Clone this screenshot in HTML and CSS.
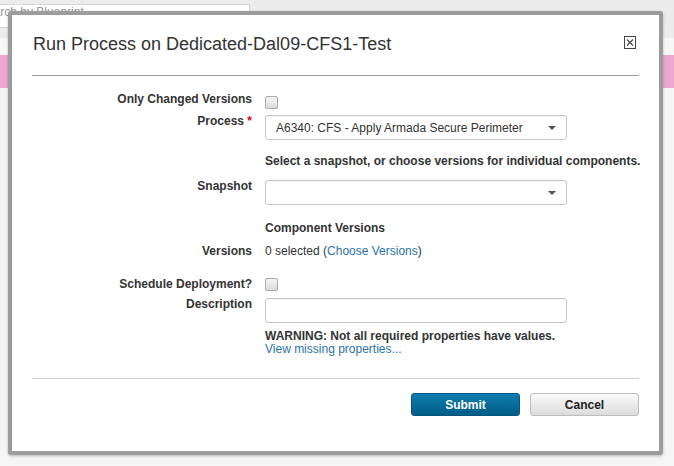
FILE: index.html
```html
<!DOCTYPE html>
<html>
<head>
<meta charset="utf-8">
<link rel="stylesheet" href="styles.css">
</head>
<body>
<div class="page">
  <div class="topbar"><div class="search">Search by Blueprint</div></div>
  <div class="subbar"></div>
  <div class="pinkbar"></div>
</div>
<div class="dialog">
  <div class="dlg-head">
    <h1 class="title">Run Process on Dedicated-Dal09-CFS1-Test</h1>
    <span class="close" title="Close">
      <svg width="12" height="13" viewBox="0 0 12 13"><rect x="0.5" y="0.5" width="11" height="12" fill="none" stroke="#444" stroke-width="1"/><path d="M3 3.5 L9 9.5 M9 3.5 L3 9.5" stroke="#444" stroke-width="1.1" fill="none"/></svg>
    </span>
  </div>
  <div class="form">
    <div class="row r1">
      <div class="label">Only Changed Versions</div>
      <div class="field"><span class="check c1"></span></div>
    </div>
    <div class="row r2">
      <div class="label">Process <span class="req">*</span></div>
      <div class="field"><div class="select"><span>A6340: CFS - Apply Armada Secure Perimeter</span><span class="caret"></span></div></div>
    </div>
    <div class="row r3">
      <div class="label"></div>
      <div class="field bold">Select a snapshot, or choose versions for individual components.</div>
    </div>
    <div class="row r4">
      <div class="label">Snapshot</div>
      <div class="field"><div class="select"><span></span><span class="caret"></span></div></div>
    </div>
    <div class="row r5">
      <div class="label"></div>
      <div class="field bold">Component Versions</div>
    </div>
    <div class="row r6">
      <div class="label">Versions</div>
      <div class="field">0 selected (<a class="link">Choose Versions</a>)</div>
    </div>
    <div class="row r7">
      <div class="label">Schedule Deployment?</div>
      <div class="field"><span class="check c7"></span></div>
    </div>
    <div class="row r8">
      <div class="label">Description</div>
      <div class="field"><div class="textbox"></div></div>
    </div>
    <div class="row r9">
      <div class="label"></div>
      <div class="field warn"><div class="bold">WARNING: Not all required properties have values.</div><a class="link">View missing properties...</a></div>
    </div>
  </div>
  <div class="footer">
    <button class="btn primary">Submit</button>
    <button class="btn">Cancel</button>
  </div>
</div>
</body>
</html>
```

FILE: styles.css
```css
html, body {
  margin: 0;
  padding: 0;
}
body {
  background: #f5f5f5;
  font-family: "Liberation Sans", Arial, Helvetica, sans-serif;
  font-size: 12px;
  color: #333;
  width: 674px;
  height: 466px;
  overflow: hidden;
}
.page {
  display: flex;
  flex-direction: column;
}
.topbar {
  height: 38px;
  background: #ececec;
  padding-top: 4px;
  box-sizing: border-box;
}
.search {
  width: 280px;
  height: 24px;
  margin-left: -30px;
  background: #fff;
  border: 1px solid #d6d6d6;
  box-sizing: border-box;
  color: #999;
  font-size: 12px;
  line-height: 14px;
  padding-left: 8px;
}
.subbar {
  height: 17px;
  background: #f7f7f7;
}
.pinkbar {
  height: 33px;
  background: #eea7d0;
}
.dialog {
  position: absolute;
  left: 8px;
  top: 11px;
  width: 655px;
  height: 444px;
  box-sizing: border-box;
  background: #fff;
  border: 4px solid #9c9c9c;
  border-radius: 3px;
  box-shadow: 0 1px 3px rgba(0,0,0,0.25);
  display: flex;
  flex-direction: column;
}
.dlg-head {
  margin: 0 20px;
  padding: 18px 0 20px 1px;
  border-bottom: 1px solid #9a9a9a;
  display: flex;
  align-items: flex-start;
}
.title {
  margin: 0;
  font-weight: normal;
  font-size: 18px;
  line-height: 22px;
  color: #333;
  flex: 1;
}
.close {
  margin-top: 3px;
  margin-right: 3px;
  width: 12px;
  height: 13px;
  display: flex;
}
.form {
  padding: 16px 20px 0 20px;
  display: flex;
  flex-direction: column;
}
.row {
  display: flex;
  align-items: flex-start;
}
.label {
  width: 220px;
  flex: none;
  text-align: right;
  font-weight: bold;
  line-height: 14px;
  color: #333;
}
.field {
  margin-left: 13px;
  line-height: 14px;
  white-space: nowrap;
  flex: none;
}
.bold {
  font-weight: bold;
}
.req {
  color: #d0021b;
}
.check {
  display: block;
  width: 13px;
  height: 13px;
  box-sizing: border-box;
  border: 1px solid #a9a9a9;
  border-radius: 2px;
  background: linear-gradient(#f4f4f4, #dcdcdc);
}
.c1 { margin-top: 4px; }
.c7 { margin-top: 1px; }
.r1 { height: 17px; }
.r2 { margin-top: 6px; }
.r2 .label { margin-top: -1px; }
.r3 { margin-top: 14px; }
.r4 { margin-top: 12px; }
.r4 .label { margin-top: -1px; }
.r5 { margin-top: 16px; }
.r6 { margin-top: 9px; }
.r7 { margin-top: 19px; }
.r8 { margin-top: 7px; }
.r8 .label { margin-top: -1px; }
.r9 { margin-top: 7px; }
.warn { line-height: 13px; }
.select, .textbox {
  width: 302px;
  height: 25px;
  box-sizing: border-box;
  border: 1px solid #c8c8c8;
  border-radius: 3px;
  background: #fff;
  box-shadow: inset 0 1px 1px rgba(0,0,0,0.05);
}
.select {
  display: flex;
  align-items: center;
  padding: 0 10px 0 10px;
  color: #333;
}
.caret {
  margin-left: auto;
  width: 0;
  height: 0;
  border-left: 4px solid transparent;
  border-right: 4px solid transparent;
  border-top: 4px solid #555;
  margin-top: 1px;
}
.link {
  color: #2a73a8;
  text-decoration: none;
}
.footer {
  margin: 22px 20px 0 20px;
  padding-top: 14px;
  border-top: 1px solid #cfcfcf;
  display: flex;
  justify-content: flex-end;
  gap: 10px;
}
.btn {
  width: 109px;
  height: 23px;
  box-sizing: border-box;
  border: 1px solid #bdbdbd;
  border-radius: 3px;
  background: linear-gradient(#fafafa, #dcdcdc);
  color: #222;
  font-family: "Liberation Sans", Arial, Helvetica, sans-serif;
  font-weight: bold;
  font-size: 12px;
  padding: 0;
  line-height: 20px;
}
.btn.primary {
  border-color: #02557e;
  background: linear-gradient(#0f7cad, #015c88);
  color: #fff;
}
```
